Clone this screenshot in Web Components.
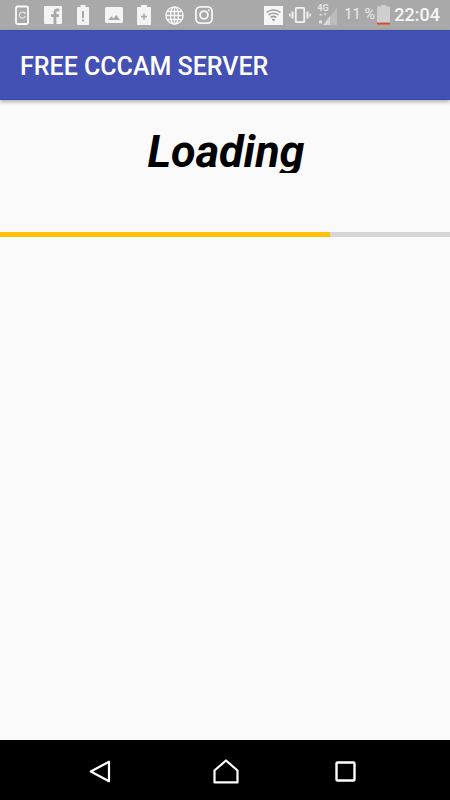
<!DOCTYPE html>
<html><head><meta charset="utf-8">
<style>
html,body{margin:0;padding:0;height:100%;background:#fafafa}
body{font-family:Roboto,sans-serif;overflow:hidden}
</style></head>
<body>
<phone-screen>
  <status-bar slot="status"></status-bar>
  <app-bar slot="bar">FREE CCCAM SERVER</app-bar>
  <loading-panel slot="main" value="73.33">Loading</loading-panel>
  <nav-bar slot="nav"></nav-bar>
</phone-screen>
<script>
function def(name, html){
  customElements.define(name, class extends HTMLElement{
    constructor(){super();this.attachShadow({mode:'open'}).innerHTML=html;}
    connectedCallback(){
      if(this.hasAttribute('value')){
        this.shadowRoot.querySelector('.fill').style.width=this.getAttribute('value')+'%';
      }
    }
  });
}
def('phone-screen',`<style>
:host{display:flex;flex-direction:column;width:450px;height:800px;background:#fafafa}
.main{flex:1;min-height:0;display:block}
</style>
<slot name="status"></slot><slot name="bar"></slot>
<div class="main"><slot name="main"></slot></div>
<slot name="nav"></slot>`);

def('status-bar',`<style>
:host{display:flex;align-items:center;height:30px;background:#a9a9a9;color:#f4f4f4;box-sizing:border-box;padding-left:15px}
svg{display:block;flex:none}
.sp{flex:1}
.pct{font:400 14.500px/30px Roboto,sans-serif;color:#ececec;margin-left:6px;width:33px;white-space:pre;letter-spacing:.1px}
.time{font:500 18px/30px Roboto,sans-serif;color:#f6f6f6;margin-left:4px;margin-right:10px}
.sig{position:relative;width:21px;height:20px;margin-left:6px;flex:none}
.sig span{position:absolute;left:0;top:-2px;font:700 9px/10px Roboto,sans-serif;color:#e6e6e6}
.sig svg{position:absolute;left:0;top:0}
</style>
<svg width="15" height="20" viewBox="0 0 15 20"><rect x="1" y="1.500" width="12" height="17.500" rx="1.500" fill="none" stroke="#fafafa" stroke-width="1.800"/><path d="M9.800 8.400A3 3 0 1 0 10.200 11" fill="none" stroke="#e2e2e2" stroke-width="1.300"/><path d="M8.600 8.800l2.400.3-.2-2.500z" fill="#e2e2e2"/></svg>
<svg width="18" height="18" viewBox="0 0 18 18" style="margin-left:14px"><path fill-rule="evenodd" fill="#f4f4f4" d="M1 0h16a1 1 0 0 1 1 1v16a1 1 0 0 1-1 1h-4.600v-7h2.400l.4-2.800h-2.800V6.500c0-.8.300-1.300 1.400-1.300h1.500V2.700c-.3 0-1.100-.1-2.100-.1-2.100 0-3.600 1.300-3.600 3.600v2H7.100V11h2.400v7H1a1 1 0 0 1-1-1V1a1 1 0 0 1 1-1z"/></svg>
<svg width="12" height="20" viewBox="0 0 12 20" style="margin-left:15px"><path fill-rule="evenodd" fill="#f4f4f4" d="M3.500 0h5v2H11a1 1 0 0 1 1 1v16a1 1 0 0 1-1 1H1a1 1 0 0 1-1-1V3a1 1 0 0 1 1-1h2.500zM5 6v7h2V6zm0 8.500v2h2v-2z"/></svg>
<svg width="18" height="18" viewBox="0 0 18 18" style="margin-left:16px"><path fill-rule="evenodd" fill="#f4f4f4" d="M1.500 1h15A1.500 1.500 0 0 1 18 2.500v13a1.500 1.500 0 0 1-1.500 1.500h-15A1.500 1.500 0 0 1 0 15.500v-13A1.500 1.500 0 0 1 1.500 1zM3 14h12l-3.600-5-2.900 3.600-2-2.400z"/></svg>
<svg width="14" height="20" viewBox="0 0 14 20" style="margin-left:14px"><path fill-rule="evenodd" fill="#f4f4f4" d="M4 0h6v2h3a1 1 0 0 1 1 1v16a1 1 0 0 1-1 1H1a1 1 0 0 1-1-1V3a1 1 0 0 1 1-1h3zM6.200 8.500v2.300H4v1.600h2.200v2.300h1.600v-2.300H10v-1.600H7.800V8.500z"/></svg>
<svg width="19" height="19" viewBox="0 0 19 19" style="margin-left:14px" fill="none" stroke="#f6f6f6" stroke-width="1.400"><circle cx="9.500" cy="9.500" r="8.600"/><ellipse cx="9.500" cy="9.500" rx="4" ry="8.600"/><path d="M9.500 1v17M1 9.500h17M2.200 5.500h14.600M2.200 13.500h14.600"/></svg>
<svg width="18" height="18" viewBox="0 0 18 18" style="margin-left:11px" fill="none" stroke="#f6f6f6" stroke-width="1.800"><rect x=".9" y=".9" width="16.200" height="16.200" rx="4.500"/><circle cx="9" cy="9" r="3.900"/><circle cx="13.800" cy="4.200" r="1" fill="#f6f6f6" stroke="none"/></svg>
<span class="sp"></span>
<svg width="19" height="19" viewBox="0 0 19 19"><path fill="#f6f6f6" d="M0 0h19v19H0z"/><path d="M2.500 6.500C6.500 3 12.500 3 16.500 6.500M4.500 9C7.300 6.800 11.700 6.800 14.500 9M6.600 11.400c1.700-1.200 4.100-1.200 5.800 0" fill="none" stroke="#9c9c9c" stroke-width="1.500"/><path d="M9.500 15.500l-1.800-2.200c1-.6 2.600-.6 3.600 0z" fill="#9c9c9c"/></svg>
<svg width="22" height="18" viewBox="0 0 22 18" style="margin-left:6px" fill="none" stroke="#f2f2f2"><rect x="6.800" y="1.800" width="8.400" height="14.400" rx="1" stroke-width="1.800"/><path d="M3.500 5.500v7M18.500 5.500v7" stroke-width="2"/><path d="M.8 7.500v3M21.200 7.500v3" stroke-width="1.500"/></svg>
<span class="sig"><span>4G</span><svg width="21" height="20" viewBox="0 0 21 20"><path d="M20 3v17H6z" fill="#bcbcbc"/><path d="M13 11v9H6z" fill="#d8d8d8"/><path d="M2 10.500l1.700-2 1.700 2zM6.500 8.500l1.700 2 1.700-2zM2 15.500h3v3H2z" fill="#e6e6e6"/></svg></span>
<span class="pct">11 %</span>
<svg width="13" height="20" viewBox="0 0 13 20"><path d="M4 0h5v1.500h3a1 1 0 0 1 1 1V17H0V2.500a1 1 0 0 1 1-1h3z" fill="#cfcfcf"/><path d="M0 18h13v1.500H0z" fill="#f0400f"/></svg>
<span class="time">22:04</span>`);

def('app-bar',`<style>
:host{display:flex;align-items:center;height:70px;box-sizing:border-box;padding:3px 0 0 20px;background:#4351b5;color:#fff;
font:500 25px/30px Roboto,sans-serif;box-shadow:0 2px 4px rgba(0,0,0,.3);position:relative;z-index:1;border-bottom:1px solid #3949ab;border-top:1px solid #3c4bb0}
</style><slot></slot>`);

def('loading-panel',`<style>
:host{display:block;height:100%;background:#fafafa}
.t{display:block;text-align:center;font:italic 700 45px/46px Roboto,sans-serif;color:#000;margin:29px 0 0 2px;height:44px;overflow:hidden}
.gap{height:59px}
.track{height:5px;background:#d6d6d6}
.fill{height:100%;background:#ffc107}
</style><div class="t"><slot></slot></div><div class="gap"></div><div class="track"><div class="fill"></div></div>`);

def('nav-bar',`<style>
:host{display:flex;align-items:center;height:60px;box-sizing:border-box;padding:3px 0 0 89px;background:#000}
svg{display:block;flex:none}
</style>
<svg width="22" height="23" viewBox="0 0 22 23" fill="none" stroke="#fff" stroke-width="2.200" stroke-linejoin="round" style="margin-right:102px"><path d="M20 1.700v19.600L1.800 11.500z"/></svg>
<svg width="26" height="25" viewBox="0 0 26 25" fill="none" stroke="#fff" stroke-width="2.200" stroke-linejoin="round" style="margin-right:96px"><path d="M13 1.500L1.500 11.500v11.900h23V11.500z"/></svg>
<svg width="21" height="21" viewBox="0 0 21 21" fill="none" stroke="#fff" stroke-width="2.400" stroke-linejoin="round"><rect x="1.500" y="1.500" width="18" height="18" rx="1"/></svg>`);
</script>
</body></html>
